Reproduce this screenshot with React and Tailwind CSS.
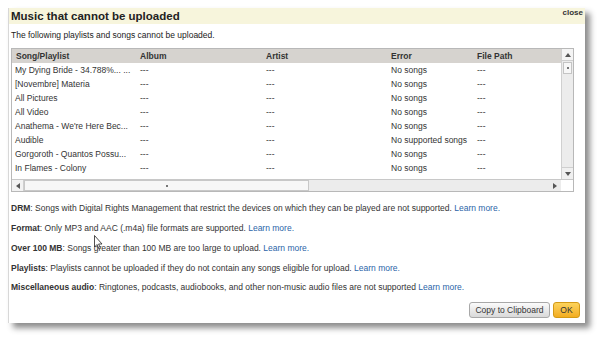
import React from "react";

const rows = [
  ["My Dying Bride - 34.788%... ...", "No songs"],
  ["[Novembre] Materia", "No songs"],
  ["All Pictures", "No songs"],
  ["All Video", "No songs"],
  ["Anathema - We're Here Bec...", "No songs"],
  ["Audible", "No supported songs"],
  ["Gorgoroth - Quantos Possu...", "No songs"],
  ["In Flames - Colony", "No songs"],
];

const cols = "grid grid-cols-[124px_126px_125px_86px_1fr]";

function Note({ label, text, link = "Learn more." }) {
  return (
    <div className="h-[19.7px] flex items-center text-[8.5px] text-[#333]">
      <span>
        <b className="font-bold">{label}</b>: {text}{" "}
        <span className="text-[#2a64a8]">{link}</span>
      </span>
    </div>
  );
}

export default function App() {
  return (
    <div
      className="w-[600px] h-[337px] bg-white relative overflow-hidden"
      style={{ fontFamily: '"Liberation Sans", Arial, sans-serif' }}
    >
      <div className="absolute left-[8px] top-[8px] w-[577px] h-[315px] bg-white border-l border-[#d8d8d8] shadow-[5px_5px_6px_rgba(0,0,0,0.45)] flex flex-col">
        {/* title bar */}
        <div className="h-[16px] bg-[#f7f5dc] flex items-start justify-between pl-[2px] pr-[2px]">
          <div className="text-[11.5px] font-bold text-[#222] leading-[15px] mt-[1px]">
            Music that cannot be uploaded
          </div>
          <div className="text-[8px] font-bold text-[#333] leading-[10px] mt-[0px]">close</div>
        </div>
        <div className="h-[23px] flex items-center pl-[2px] text-[8.5px] text-[#222]">
          The following playlists and songs cannot be uploaded.
        </div>

        {/* table */}
        <div className="ml-[2px] mt-[1px] w-[563px] h-[144px] border border-[#b8b8b8] flex flex-col">
          <div className="flex h-[130px]">
            <div className="flex-1 flex flex-col">
              <div className={`${cols} h-[14px] bg-[#d6d3cf] items-center text-[8.5px] font-bold text-[#333] pl-[4px]`}>
                <div>Song/Playlist</div>
                <div>Album</div>
                <div>Artist</div>
                <div>Error</div>
                <div>File Path</div>
              </div>
              <div className="flex-1 bg-white">
                {rows.map(([s, e], i) => (
                  <div key={i} className={`${cols} h-[14px] items-center text-[8.5px] text-[#333] pl-[3px]`}>
                    <div>{s}</div>
                    <div className="pl-[1px]">---</div>
                    <div className="pl-[1px]">---</div>
                    <div className="pl-[1px]">{e}</div>
                    <div className="pl-[1px]">---</div>
                  </div>
                ))}
              </div>
            </div>
            {/* vertical scrollbar */}
            <div className="w-[12px] bg-[#ececec] border-l border-[#d0d0d0] flex flex-col">
              <div className="h-[12px] bg-[#f4f4f4] border-b border-[#cfcfcf] flex items-center justify-center">
                <svg width="6" height="4" viewBox="0 0 6 4"><path d="M0 4 L3 0 L6 4 Z" fill="#555" /></svg>
              </div>
              <div className="h-[12px] bg-[#f7f7f7] border border-[#c4c4c4] mx-[1px] mt-[1px] flex items-center justify-center">
                <div className="w-[2px] h-[2px] bg-[#777]" />
              </div>
              <div className="flex-1" />
              <div className="h-[12px] bg-[#f0f0f0] border-t border-[#cfcfcf] flex items-center justify-center">
                <svg width="6" height="4" viewBox="0 0 6 4"><path d="M0 0 L6 0 L3 4 Z" fill="#555" /></svg>
              </div>
            </div>
          </div>
          <div className="flex flex-1 border-t border-[#c8c8c8]">
            <div className="flex-1 bg-[#ececec] flex">
              <div className="w-[12px] flex items-center justify-center border-r border-[#cfcfcf] bg-[#f2f2f2]">
                <svg width="4" height="6" viewBox="0 0 4 6"><path d="M4 0 L0 3 L4 6 Z" fill="#555" /></svg>
              </div>
              <div className="w-[285px] bg-[#f7f7f7] border border-[#c8c8c8] flex items-center justify-center">
                <div className="w-[2px] h-[2px] bg-[#777]" />
              </div>
              <div className="flex-1" />
              <div className="w-[12px] flex items-center justify-center">
                <svg width="4" height="6" viewBox="0 0 4 6"><path d="M0 0 L4 3 L0 6 Z" fill="#555" /></svg>
              </div>
            </div>
            <div className="w-[12px] bg-white" />
          </div>
        </div>

        {/* notes */}
        <div className="pl-[2px] mt-[7px] flex flex-col">
          <Note label="DRM" text="Songs with Digital Rights Management that restrict the devices on which they can be played are not supported." />
          <Note label="Format" text="Only MP3 and AAC (.m4a) file formats are supported." />
          <Note label="Over 100 MB" text="Songs greater than 100 MB are too large to upload." />
          <Note label="Playlists" text="Playlists cannot be uploaded if they do not contain any songs eligible for upload." />
          <Note label="Miscellaneous audio" text="Ringtones, podcasts, audiobooks, and other non-music audio files are not supported" link="Learn more." />
        </div>

        {/* buttons */}
        <div className="flex justify-end gap-[3px] pr-[5px] mt-[5px]">
          <div className="w-[81px] h-[16px] rounded-[3px] border border-[#a8a8a8] bg-gradient-to-b from-[#fbfbfb] to-[#d9d9d9] flex items-center justify-center text-[8.5px] text-[#333]">
            Copy to Clipboard
          </div>
          <div className="w-[27px] h-[16px] rounded-[3px] border border-[#d49a16] bg-gradient-to-b from-[#fcd35a] to-[#f3ad1e] flex items-center justify-center text-[8.5px] text-[#333]">
            OK
          </div>
        </div>
      </div>

      {/* mouse cursor */}
      <svg className="absolute left-[94px] top-[235px]" width="9" height="15" viewBox="0 0 9 15">
        <path d="M0.5 0.5 L0.5 12 L3 9.5 L5 14 L6.5 13.3 L4.6 9 L8 9 Z" fill="white" stroke="#222" strokeWidth="0.8" strokeLinejoin="round" />
      </svg>
    </div>
  );
}
